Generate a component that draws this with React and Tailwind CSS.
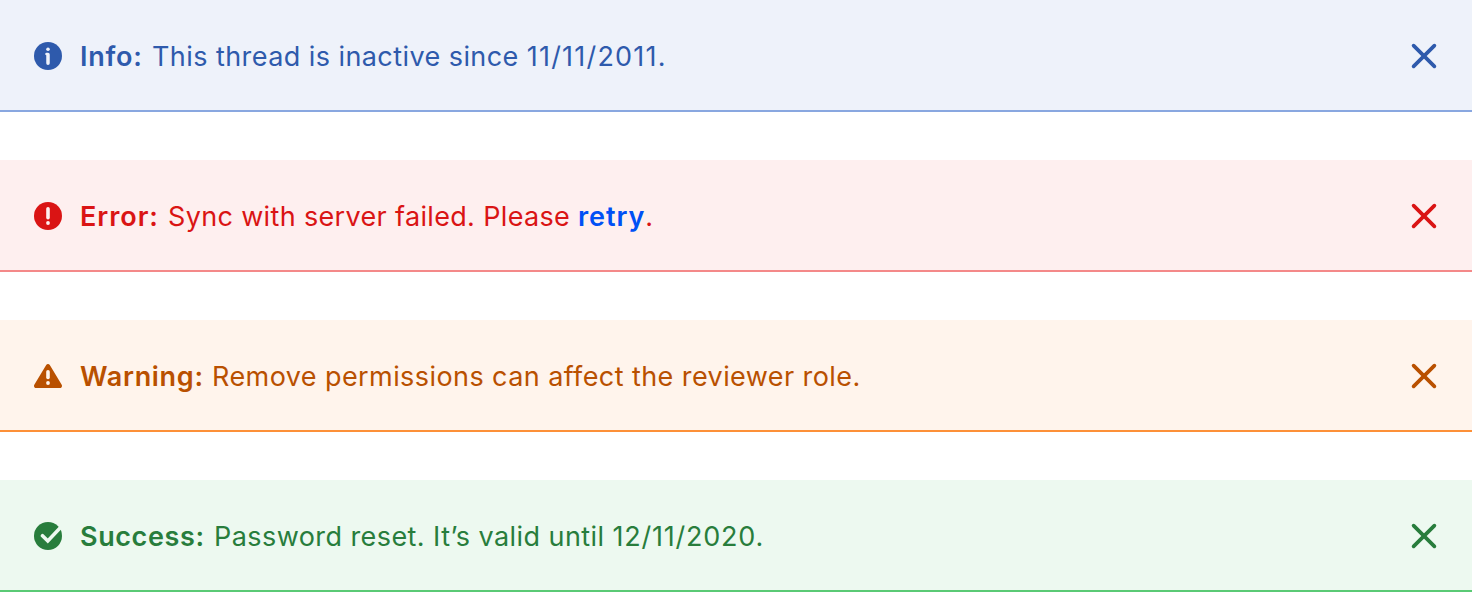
import React from "react";

const Close = () => (
  <svg width="28" height="28" viewBox="0 0 28 28" fill="none" stroke="currentColor" strokeWidth="3.7" strokeLinecap="round">
    <path d="M3.600 3.600 24.400 24.400M24.400 3.600 3.600 24.400" />
  </svg>
);

const InfoIcon = ({ hole }) => (
  <svg width="28" height="28" viewBox="0 0 28 28" fill="currentColor">
    <circle cx="14" cy="14" r="14" />
    <circle cx="14" cy="7.200" r="1.800" fill={hole} />
    <path d="M12.800 10.700h1.200a1.750 1.750 0 0 1 1.750 1.750v8.700a1.750 1.750 0 0 1-3.500 0v-7.850a1.300 1.300 0 0 1 .55-2.600z" fill={hole} />
  </svg>
);

const ErrorIcon = ({ hole }) => (
  <svg width="28" height="28" viewBox="0 0 28 28" fill="currentColor">
    <circle cx="14" cy="14" r="14" />
    <rect x="12.200" y="5" width="3.600" height="12.500" rx="1.800" fill={hole} />
    <circle cx="14" cy="21" r="1.900" fill={hole} />
  </svg>
);

const WarningIcon = ({ hole }) => (
  <svg width="28" height="28" viewBox="0 0 28 28" fill="currentColor">
    <path d="M12.200 3 .3 22.700C-.5 24.300.400 26 2.200 26h23.600c1.800 0 2.700-1.700 1.900-3.300L15.800 3c-.8-1.300-2.800-1.300-3.600 0z" />
    <rect x="12.200" y="8" width="3.600" height="9.300" rx="1.800" fill={hole} />
    <circle cx="14" cy="21" r="1.900" fill={hole} />
  </svg>
);

const SuccessIcon = ({ hole }) => (
  <svg width="28" height="28" viewBox="0 0 28 28" fill="currentColor">
    <circle cx="14" cy="14" r="14" />
    <path d="M8.500 13.700 13.800 19 27 5" fill="none" stroke={hole} strokeWidth="3.600" strokeLinecap="round" />
  </svg>
);

function Banner({ icon, label, children, className, labelClass, textClass }) {
  return (
    <div className={"flex h-28 items-center border-b-2 px-[34px] pt-0.5 " + className}>
      <span className="shrink-0">{icon}</span>
      <p className="ml-[18px] flex flex-1 items-baseline whitespace-pre pt-0.5 text-[27px] leading-10">
        <strong className={"shrink-0 font-semibold " + labelClass}>{label}</strong>
        <span className={textClass}>{children}</span>
      </p>
      <button aria-label="Dismiss"><Close /></button>
    </div>
  );
}

export default function App() {
  return (
    <main className="flex h-[592px] flex-col gap-12 bg-white font-['Inter',sans-serif]">
      <Banner icon={<InfoIcon hole="#eef2fa" />} label="Info:" className="border-[#89a7e0] bg-[#eef2fa] text-[#2e5aac]" labelClass="w-[72px] tracking-[0.75px]" textClass="tracking-[0.43px]">
        This thread is inactive since <span className="tracking-[1.2px]">11/11/2011.</span>
      </Banner>
      <Banner icon={<ErrorIcon hole="#feefef" />} label="Error:" className="border-[#f48989] bg-[#feefef] text-[#da1414]" labelClass="w-[88px] tracking-[0.95px]" textClass="tracking-[0.34px]">
        Sync with server failed. Please <a className="font-semibold tracking-[0.9px] text-[#0050f5]">retry</a>.
      </Banner>
      <Banner icon={<WarningIcon hole="#fff4ec" />} label="Warning:" className="border-[#fd9038] bg-[#fff4ec] text-[#b95000]" labelClass="w-[132px] tracking-[0.7px]" textClass="tracking-[0.42px] [font-variant-ligatures:none]">
        Remove permissions can affect the reviewer role.
      </Banner>
      <Banner icon={<SuccessIcon hole="#edf9f0" />} label="Success:" className="border-[#5aca75] bg-[#edf9f0] text-[#287d3c]" labelClass="w-[134px] tracking-[0.6px]" textClass="tracking-[0.43px]">
        Password reset. It’s valid until <span className="tracking-[0.77px]">12/11/2020.</span>
      </Banner>
    </main>
  );
}
